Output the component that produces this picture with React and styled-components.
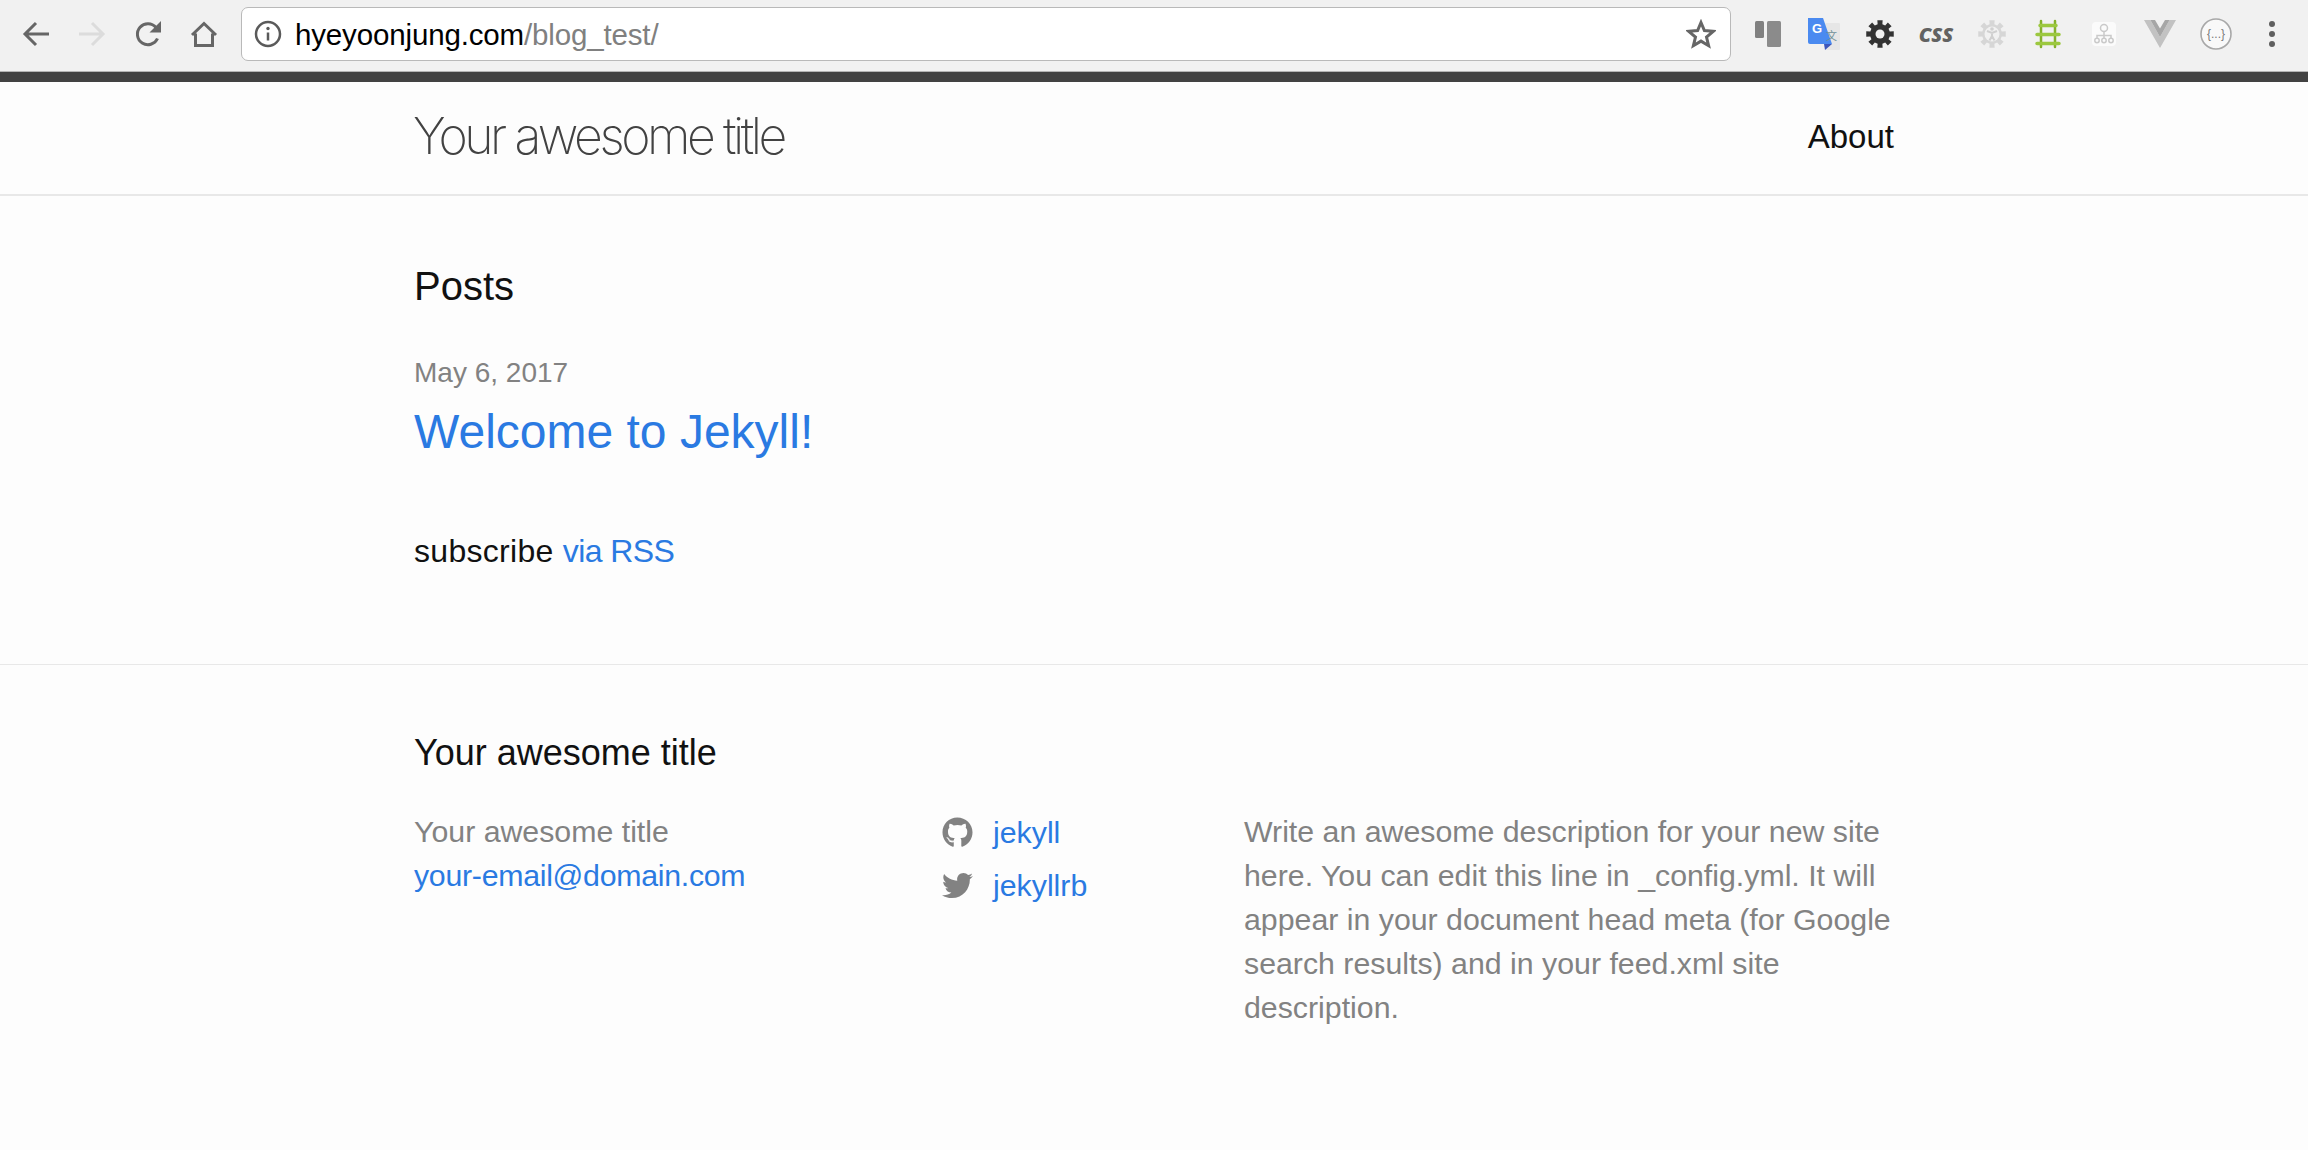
import React from "react";
import styled, { createGlobalStyle } from "styled-components";
import { FaTwitter, FaGithub } from "react-icons/fa";

const GlobalStyle = createGlobalStyle`
  html, body {
    margin: 0;
    padding: 0;
    background-color: #fdfdfd;
  }
  body {
    font-family: "Liberation Sans", Arial, sans-serif;
    color: #111;
  }
  a {
    color: #2a7ae2;
    text-decoration: none;
  }
`;

const Toolbar = styled.div`
  display: flex;
  align-items: center;
  height: 68px;
  padding: 0 8px 3px 8px;
  background-color: #f1f1f1;
  border-bottom: 1px solid #b4b4b4;
`;

const Slot = styled.div`
  display: flex;
  align-items: center;
  justify-content: center;
  flex: 0 0 56px;
  height: 56px;
`;

const NavGroup = styled.div`
  display: flex;
`;

const AddressBar = styled.div`
  display: flex;
  align-items: center;
  flex: 1;
  height: 52px;
  margin: 0 9px;
  padding: 0 14px 0 12px;
  background-color: #fff;
  border: 1px solid #b9b9b9;
  border-radius: 7px;
`;

const Url = styled.div`
  flex: 1;
  margin: 2px 0 0 13px;
  font-size: 29.5px;
  color: #000;
  letter-spacing: -0.15px;
`;

const UrlPath = styled.span`
  color: #808080;
`;

const CssMark = styled.span`
  font-family: "Open Sans", sans-serif;
  font-weight: 800;
  font-style: italic;
  font-size: 20px;
  color: #626262;
`;

const Header = styled.header`
  display: flex;
  align-items: center;
  justify-content: space-between;
  height: 112px;
  padding: 0 414px 0 413px;
  border-top: 10px solid #424242;
  border-bottom: 2px solid #e8e8e8;
`;

const SiteTitle = styled.a`
  margin-bottom: 5px;
  font-family: "Inter", sans-serif;
  font-weight: 200;
  font-size: 50px;
  letter-spacing: -3.45px;
  color: #424242;
`;

const NavLink = styled.a`
  margin-bottom: 2px;
  font-size: 33px;
  color: #111;
`;

const Main = styled.main`
  padding: 60px 414px 91px;
`;

const PageHeading = styled.h1`
  margin: 0 0 35px;
  font-size: 40px;
  font-weight: normal;
  line-height: 60px;
`;

const PostDate = styled.div`
  font-size: 28px;
  line-height: 44px;
  color: #828282;
`;

const PostTitle = styled.a`
  display: block;
  margin: 7px 0 67px;
  font-size: 48px;
  line-height: 60px;
`;

const Subscribe = styled.p`
  margin: 0;
  font-size: 32px;
  line-height: 44px;
  letter-spacing: 0.3px;
`;

const SubscribeLink = styled.a`
  letter-spacing: -0.6px;
`;

const Footer = styled.footer`
  padding: 66px 414px 0;
  border-top: 1px solid #e8e8e8;
`;

const FooterHeading = styled.h2`
  margin: 0 0 35px;
  font-size: 36px;
  font-weight: normal;
  line-height: 44px;
`;

const FooterColumns = styled.div`
  display: grid;
  grid-template-columns: 528px 302px 650px;
  font-size: 30.3px;
  line-height: 44px;
  color: #828282;
`;

const ContactLine = styled.div`
  white-space: nowrap;
`;

const EmailLink = styled.a`
  letter-spacing: -0.28px;
`;

const SocialRow = styled.a`
  display: flex;
  align-items: center;
  gap: 20px;
  height: 53px;
  &:first-child {
    margin-top: -4px;
  }
`;

const SocialIcon = styled.span`
  display: flex;
  font-size: 31px;
  color: #828282;
`;

const Description = styled.p`
  margin: 0;
`;

const ICON_GREY = "#666";

const Arrow = ({ flip, color }) => (
  <svg width="28" height="26" viewBox="0 0 28 26" fill="none" stroke={color} strokeWidth="3">
    <g transform={flip ? "matrix(-1 0 0 1 28 0)" : undefined}>
      <path d="M27 13H3.5M14 2 3 13l11 11" />
    </g>
  </svg>
);

const ReloadIcon = () => (
  <svg width="28" height="28" viewBox="0 0 28 28" fill="none">
    <path d="M23.500 18.500a10.500 10.500 0 1 1-1.500-11" stroke={ICON_GREY} strokeWidth="3" />
    <path d="M27 1v11.500H15.500z" fill={ICON_GREY} />
  </svg>
);

const HomeIcon = () => (
  <svg width="28" height="26" viewBox="0 0 28 26" fill="none" stroke={ICON_GREY} strokeWidth="3">
    <path d="M2 14 14 2.500 26 14M5.500 12.500V24.500h17V12.500" />
  </svg>
);

const InfoIcon = () => (
  <svg width="28" height="28" viewBox="0 0 28 28" fill="none">
    <circle cx="14" cy="14" r="12" stroke="#5a5a5a" strokeWidth="2.500" />
    <path d="M14 12.500v8" stroke="#5a5a5a" strokeWidth="2.500" />
    <circle cx="14" cy="8.500" r="1.700" fill="#5a5a5a" />
  </svg>
);

const StarIcon = () => (
  <svg width="30" height="30" viewBox="0 0 30 30" fill="none" stroke={ICON_GREY} strokeWidth="3">
    <path d="M15 3.500 18.400 11.600l8.900.7-6.800 5.800 2.100 8.600L15 22.100 7.400 26.700l2.100-8.600-6.800-5.800 8.900-.7z" />
  </svg>
);

const PanelsIcon = () => (
  <svg width="26" height="26" viewBox="0 0 26 26">
    <rect x="0" y="0" width="9" height="17" rx="1.500" fill="#808080" />
    <rect x="12" y="0" width="14" height="26" rx="1.500" fill="#8b8b8b" />
  </svg>
);

const TranslateIcon = () => (
  <svg width="32" height="32" viewBox="0 0 32 32">
    <rect x="17" y="5" width="15" height="27" rx="1" fill="#e6e6e6" />
    <path d="M16 26l1 6 7-6z" fill="#3d57bb" />
    <path d="M0 0h15l9 26H2a2 2 0 0 1-2-2z" fill="#4a8af0" />
    <text x="4" y="15" fontFamily="Liberation Sans" fontWeight="bold" fontSize="13" fill="#fff">G</text>
    <text x="18" y="22" fontFamily="Noto Sans CJK SC" fontSize="11" fill="#6f9098">文</text>
  </svg>
);

// eight chunky teeth around a 28px box
const gearPath = (() => {
  const points = [];
  for (let i = 0; i < 8; i++) {
    const a = (i * Math.PI) / 4;
    [
      [10, -0.24],
      [14, -0.19],
      [14, 0.19],
      [10, 0.24],
    ].forEach(([r, off]) => {
      points.push(`${(14 + r * Math.sin(a + off)).toFixed(2)} ${(14 - r * Math.cos(a + off)).toFixed(2)}`);
    });
  }
  return "M" + points.join("L") + "z";
})();

const GearIcon = () => (
  <svg width="28" height="28" viewBox="0 0 28 28">
    <path d={gearPath} fill="#333" />
    <circle cx="14" cy="14" r="4.500" fill="#f1f1f1" />
  </svg>
);

const AccessGearIcon = () => (
  <svg width="28" height="28" viewBox="0 0 28 28">
    <path d={gearPath} fill="#d6d6d6" />
    <circle cx="14" cy="14" r="7.500" fill="#f1f1f1" />
    <circle cx="14" cy="9" r="1.800" fill="#d0d0d0" />
    <path d="M9 11 14 13l5-2M14 12.500v3.500M14 16l-2.500 4.500M14 16l2.500 4.500" fill="none" stroke="#d0d0d0" strokeWidth="2" />
  </svg>
);

const LadderIcon = () => (
  <svg width="26" height="30" viewBox="0 0 26 30" fill="none" strokeLinecap="round">
    <path d="M6 2v26M20 2v26" stroke="#85b12b" strokeWidth="2.500" />
    <path d="M5 6.500h16M2 15.500h22M2 24.500h22" stroke="#9cc83f" strokeWidth="3.500" />
  </svg>
);

const OrgIcon = () => (
  <svg width="24" height="24" viewBox="0 0 24 24" fill="none">
    <rect width="24" height="24" rx="4" fill="#fbfbfb" />
    <g stroke="#cacaca" strokeWidth="1.500">
      <circle cx="12" cy="6" r="3.500" />
      <path d="M12 9.500V17M5 17v-3.500h14V17" />
      <circle cx="5" cy="18.500" r="2.200" />
      <circle cx="12" cy="18.500" r="2.200" />
      <circle cx="19" cy="18.500" r="2.200" />
    </g>
  </svg>
);

const VueIcon = () => (
  <svg width="32" height="28" viewBox="0 0 32 28">
    <path d="M0 0h6.400L16 17 25.600 0H32L16 28z" fill="#c2c2c2" />
    <path d="M6.400 0H11l5 8.500L21 0h4.600L16 17z" fill="#a6a6a6" />
  </svg>
);

const BracesIcon = () => (
  <svg width="32" height="32" viewBox="0 0 32 32">
    <circle cx="16" cy="16" r="15" fill="#f9f9f9" stroke="#a8a8a8" strokeWidth="1.600" />
    <text x="16" y="20" textAnchor="middle" fontFamily="Liberation Sans" fontSize="12" fill="#7a7a7a">
      {"{...}"}
    </text>
  </svg>
);

const MenuIcon = () => (
  <svg width="8" height="28" viewBox="0 0 8 28" fill="#5f5f5f">
    <circle cx="4" cy="4" r="3" />
    <circle cx="4" cy="14" r="3" />
    <circle cx="4" cy="24" r="3" />
  </svg>
);

const extensions = [
  <PanelsIcon />,
  <TranslateIcon />,
  <GearIcon />,
  <CssMark>CSS</CssMark>,
  <AccessGearIcon />,
  <LadderIcon />,
  <OrgIcon />,
  <VueIcon />,
  <BracesIcon />,
  <MenuIcon />,
];

const App = () => {
  return (
    <>
      <GlobalStyle />
      <Toolbar>
        <NavGroup>
          <Slot><Arrow color={ICON_GREY} /></Slot>
          <Slot><Arrow flip color="#dcdcdc" /></Slot>
          <Slot><ReloadIcon /></Slot>
          <Slot><HomeIcon /></Slot>
        </NavGroup>
        <AddressBar>
          <InfoIcon />
          <Url>
            hyeyoonjung.com<UrlPath>/blog_test/</UrlPath>
          </Url>
          <StarIcon />
        </AddressBar>
        <NavGroup>
          {extensions.map((icon, i) => (
            <Slot key={i}>{icon}</Slot>
          ))}
        </NavGroup>
      </Toolbar>

      <Header>
        <SiteTitle href="#">Your awesome title</SiteTitle>
        <NavLink href="#">About</NavLink>
      </Header>

      <Main>
        <PageHeading>Posts</PageHeading>
        <PostDate>May 6, 2017</PostDate>
        <PostTitle href="#">Welcome to Jekyll!</PostTitle>
        <Subscribe>
          subscribe <SubscribeLink href="#">via RSS</SubscribeLink>
        </Subscribe>
      </Main>

      <Footer>
        <FooterHeading>Your awesome title</FooterHeading>
        <FooterColumns>
          <div>
            <ContactLine>Your awesome title</ContactLine>
            <ContactLine>
              <EmailLink href="#">your-email@domain.com</EmailLink>
            </ContactLine>
          </div>
          <div>
            <SocialRow href="#">
              <SocialIcon><FaGithub /></SocialIcon>
              jekyll
            </SocialRow>
            <SocialRow href="#">
              <SocialIcon><FaTwitter /></SocialIcon>
              jekyllrb
            </SocialRow>
          </div>
          <Description>
            Write an awesome description for your new site here. You can edit this line in
            _config.yml. It will appear in your document head meta (for Google search results)
            and in your feed.xml site description.
          </Description>
        </FooterColumns>
      </Footer>
    </>
  );
};

export default App;
